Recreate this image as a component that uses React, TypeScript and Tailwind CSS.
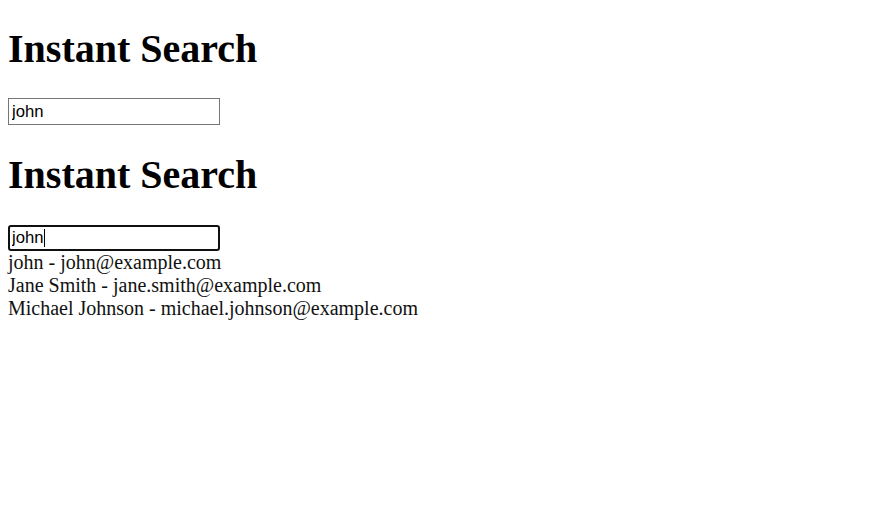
import React from "react";

const users = [
  "john - john@example.com",
  "Jane Smith - jane.smith@example.com",
  "Michael Johnson - michael.johnson@example.com",
];

function Heading({ top }: { top: string }) {
  return (
    <h1
      className={`${top} mb-[26px] font-['Liberation_Serif','Times_New_Roman',serif] text-[40px] font-bold leading-[46px]`}
    >
      Instant Search
    </h1>
  );
}

export default function App() {
  return (
    <div className="min-h-[505px] bg-white px-2 font-['Liberation_Serif','Times_New_Roman',serif] text-black">
      <section className="flex flex-col items-start">
        <h1 className="mt-[26px] mb-[26px] font-['Liberation_Serif','Times_New_Roman',serif] text-[40px] font-bold leading-[46px]">
          Instant Search
        </h1>
        <input
          type="text"
          defaultValue="john"
          readOnly
          className="h-[27px] w-[212px] border border-[#767676] bg-white px-[3px] font-['Liberation_Sans',Arial,sans-serif] text-[16.67px] leading-[20px] text-black outline-none"
        />
      </section>
      <section className="flex flex-col items-start">
        <h1 className="mt-[27px] mb-[26px] font-['Liberation_Serif','Times_New_Roman',serif] text-[40px] font-bold leading-[46px]">
          Instant Search
        </h1>
        <div className="relative mt-[1px]">
          <input
            type="text"
            defaultValue="john"
            readOnly
            className="h-[26px] w-[212px] rounded-[3px] border-2 border-[#101010] bg-white px-[2px] font-['Liberation_Sans',Arial,sans-serif] text-[16.67px] leading-[20px] text-black caret-transparent outline-none"
          />
          <span className="pointer-events-none absolute left-[36px] top-[4px] h-[18px] w-px bg-black" />
        </div>
        <ul className="m-0 list-none p-0">
          {users.map((u) => (
            <li key={u} className="text-[20px] leading-[23px] text-[#111]">
              {u}
            </li>
          ))}
        </ul>
      </section>
    </div>
  );
}
